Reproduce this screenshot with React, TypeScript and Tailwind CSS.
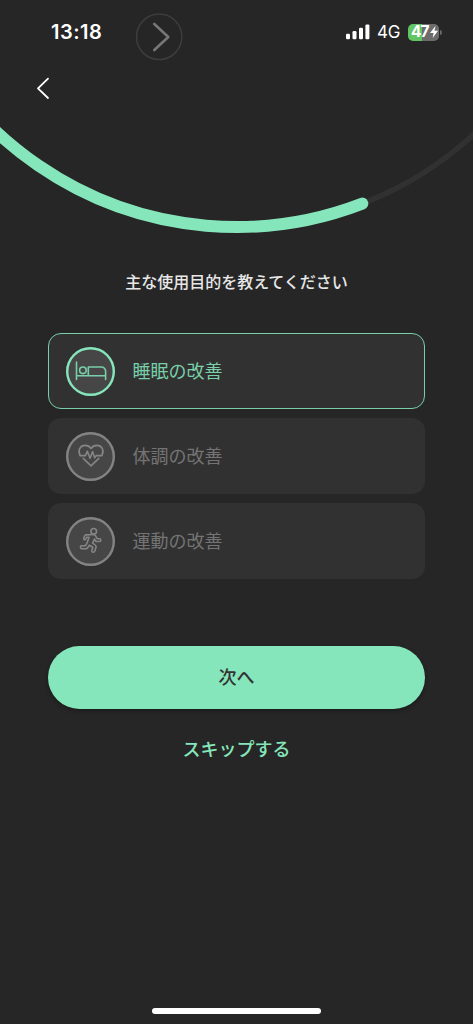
import React from "react";

function BedIcon() {
  return (
    <svg width="32" height="32" viewBox="0 0 32 32" fill="none" stroke="currentColor" strokeWidth="1.6" strokeLinecap="round" strokeLinejoin="round">
      <path d="M1.5 7V24.4M1.5 20.8H30.6M30.6 24.4V16.2a4.2 4.2 0 0 0-4.2-4.2H13.3V20.8" />
      <circle cx="7.9" cy="15.3" r="3.3" />
    </svg>
  );
}

function HeartIcon() {
  return (
    <svg width="32" height="32" viewBox="0 0 32 32" fill="none" stroke="currentColor" strokeWidth="1.6" strokeLinecap="round" strokeLinejoin="round">
      <path d="M4.9 14.8C2.5 10.2 5.4 5.4 9.9 5.4C12.5 5.4 14.7 6.5 16 8.5C17.3 6.5 19.5 5.4 22.1 5.4C26.6 5.4 29.5 10.2 27.1 14.8" />
      <path d="M4.9 15.6H10.4L12.4 11.2L15 18.2L17.6 11.6L19.7 17.8L21.2 15.6H27.1" />
      <path d="M8.2 18.3L16 25.8L23.8 18.3" />
    </svg>
  );
}

function RunnerIcon() {
  return (
    <svg width="32" height="32" viewBox="0 0 32 32" fill="none" stroke="currentColor" strokeWidth="1.6" strokeLinecap="round" strokeLinejoin="round">
      <circle cx="18.7" cy="6.3" r="2.8" />
      <path d="M15.9 9.6L10.8 9.9C9.5 10.2 8.7 12.7 8.8 14C9 15.1 10.4 15.1 10.8 13.9L11.8 12.2H14L12.1 17.9L10.3 20.8H6.4C5 21 5.1 23.5 6.5 23.7H11.2C12.7 23.5 13.6 21.2 14.4 20.2L17.8 22.2L16.8 25.8C16.8 27.5 19.1 27.7 19.7 26.3L21.2 21.8C21.3 20.2 18.8 19.1 17.6 18.1L19.4 14L21 16.5H24.8C26.3 16.3 26 13.9 24.6 13.8H22.3L20.6 10.9C19.8 9.6 18 9.3 15.9 9.6Z" />
    </svg>
  );
}

const options = [
  { label: "睡眠の改善", icon: <BedIcon />, selected: true },
  { label: "体調の改善", icon: <HeartIcon />, selected: false },
  { label: "運動の改善", icon: <RunnerIcon />, selected: false },
];

function StatusBar() {
  return (
    <div className="flex h-16 items-center">
      <span className="ml-[51px] w-[85px] font-['Inter'] text-[20px] leading-none font-semibold tracking-[0.5px] text-white">13:18</span>
      <svg className="mt-[9px]" width="48" height="48" viewBox="0 0 48 48" fill="none">
        <circle cx="23.2" cy="23.8" r="22.7" stroke="#3d3d3d" strokeWidth="1.5" />
        <path d="M18.3 11L32.3 24L18.3 37" stroke="#777" strokeWidth="2.6" strokeLinecap="round" strokeLinejoin="round" />
      </svg>
      <div className="mr-[31px] ml-auto flex items-center">
        <svg width="24" height="16" viewBox="0 0 24 16" fill="#fff">
          <rect x="0" y="9.8" width="4" height="5.4" rx="1.2" />
          <rect x="6.5" y="7" width="4" height="8.2" rx="1.2" />
          <rect x="13" y="3.8" width="4" height="11.4" rx="1.2" />
          <rect x="19.4" y="0.5" width="4" height="14.7" rx="1.2" />
        </svg>
        <span className="ml-[7px] w-[31px] font-['Inter'] text-[17px] leading-none tracking-[-0.2px] text-white">4G</span>
        <div className="flex h-[17px] w-[31px] items-center rounded-[5px] bg-[linear-gradient(90deg,#63c466_46%,#6c6c6c_46%)] pl-[3px]">
          <span className="font-['Inter'] text-[15.5px] leading-none font-bold tracking-[-0.9px] text-white">47</span>
          <svg className="ml-px" width="8" height="12" viewBox="0 0 8 12" fill="#fff"><path d="M5.5 0L0 7H3.6L2.6 12L8 4.8H4.5Z" /></svg>
        </div>
        <div className="ml-px h-[5px] w-[2px] rounded-r-full bg-[#666]" />
      </div>
    </div>
  );
}

export default function App() {
  return (
    <main className="relative flex h-[1024px] w-[473px] flex-col overflow-hidden bg-[#262626] font-['Noto_Sans_CJK_JP',sans-serif]">
      <svg className="pointer-events-none absolute inset-x-0 top-0" width="473" height="250" viewBox="0 0 473 250" fill="none">
        <circle cx="236.5" cy="-123" r="350" stroke="#313131" strokeWidth="5.5" />
        <path d="M-113.5 -123A350 350 0 0 0 362.3 203.6" stroke="#86e6bb" strokeWidth="12" strokeLinecap="round" />
      </svg>
      <StatusBar />
      <button aria-label="戻る" className="mt-3 ml-[35px] h-6 w-4 text-white">
        <svg width="16" height="24" viewBox="0 0 16 24" fill="none" stroke="currentColor" strokeWidth="1.8" strokeLinecap="round" strokeLinejoin="round">
          <path d="M13 2.6L3 12.4L13 22" />
        </svg>
      </button>
      <h1 className="mt-[169px] text-center text-[16px] leading-6 font-medium text-[#e8e8e8]">主な使用目的を教えてください</h1>
      <div className="mx-[48.4px] mt-[40.4px] flex flex-col gap-[9.6px]">
        {options.map((o) => (
          <button
            key={o.label}
            className={
              o.selected
                ? "flex h-[75.4px] items-center rounded-[13px] border-[1.5px] border-[#79cfa9] bg-[#313131] pl-[17px] text-[#79cfa9]"
                : "flex h-[75.4px] items-center rounded-[13px] bg-[#313131] pl-[18px] text-[#747474]"
            }
          >
            <span
              className={
                o.selected
                  ? "flex size-[49px] items-center justify-center rounded-full bg-[#464646] text-[#79cfa9] inset-ring-[2.4px] inset-ring-[#86e6bb]"
                  : "flex size-[49px] items-center justify-center rounded-full bg-[#464646] text-[#858585] inset-ring-[2.4px] inset-ring-[#838383]"
              }
            >
              {o.icon}
            </span>
            <span className="ml-[17px] pb-[2px] text-[18px] leading-6 font-normal">{o.label}</span>
          </button>
        ))}
      </div>
      <button className="mx-[48.4px] mt-[67.4px] h-[62.6px] rounded-full bg-[#86e6bb] pb-[2px] text-[18px] font-medium text-[#333] shadow-[0_2px_4px_rgba(0,0,0,0.3)]">次へ</button>
      <button className="mx-auto mt-[26px] text-[18px] leading-[26px] font-medium text-[#86e6bb]">スキップする</button>
      <div className="mx-auto mt-auto mb-[10px] h-[6px] w-[169px] rounded-full bg-white" />
    </main>
  );
}
